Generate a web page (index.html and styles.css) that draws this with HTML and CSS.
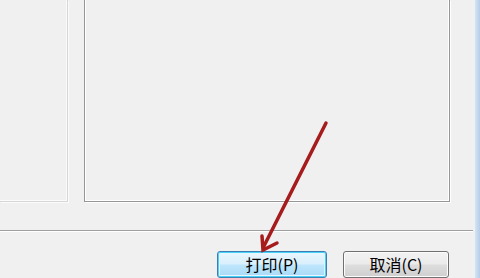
FILE: index.html
```html
<!DOCTYPE html>
<html lang="zh-CN">
<head>
<meta charset="utf-8">
<title>打印</title>
<link rel="stylesheet" href="styles.css">
</head>
<body>
<div class="window">
  <div class="main">
    <div class="panels">
      <div class="left-panel"></div>
      <div class="right-panel"></div>
    </div>
    <div class="separator"></div>
    <div class="buttons">
      <button class="btn btn-default">打印(P)</button>
      <button class="btn">取消(C)</button>
    </div>
  </div>
  <div class="frame"></div>
</div>
<svg class="arrow" width="480" height="278" viewBox="0 0 480 278">
  <line x1="326" y1="123" x2="264" y2="246" stroke="#a61b1b" stroke-width="3.5" stroke-linecap="round"/>
  <polyline points="262,236 263,250 277,243" fill="none" stroke="#a61b1b" stroke-width="3.5" stroke-linejoin="miter" stroke-linecap="round"/>
</svg>
</body>
</html>
```
FILE: styles.css
```css
html, body {
  margin: 0;
  padding: 0;
}
body {
  width: 480px;
  height: 278px;
  overflow: hidden;
  background: #f0f0f0;
  font-family: "Noto Sans CJK SC", "Liberation Sans", sans-serif;
  position: relative;
}
.window {
  display: flex;
  height: 278px;
}
.main {
  width: 474px;
  display: flex;
  flex-direction: column;
}
.frame {
  width: 6px;
  background: linear-gradient(to right, #d6e4f2, #b5cde6);
  border-left: 1px solid #eaf1f9;
  box-sizing: border-box;
}
.panels {
  display: flex;
  height: 202px;
}
.left-panel {
  box-sizing: border-box;
  width: 68px;
  height: 202px;
  border-right: 1px solid #d6d6d6;
  border-bottom: 1px solid #d6d6d6;
  box-shadow: inset -1px -1px 0 #fbfbfb, 1px 1px 0 #fbfbfb;
}
.right-panel {
  box-sizing: border-box;
  margin-left: 16px;
  width: 366px;
  height: 202px;
  border: 1px solid #969696;
  border-top: none;
  box-shadow: inset 1px -1px 0 #ffffff, inset -1px 0 0 #ffffff, 1px 1px 0 #ffffff;
}
.separator {
  margin-top: 28px;
  width: 473px;
  border-top: 1px solid #a0a0a0;
  border-bottom: 1px solid #ffffff;
}
.buttons {
  display: flex;
  gap: 16px;
  padding-top: 19px;
  padding-left: 217px;
}
.btn {
  box-sizing: border-box;
  width: 110px;
  height: 27px;
  margin: 0;
  padding: 0;
  border: 1px solid #707070;
  border-radius: 3px;
  background: linear-gradient(to bottom, #f2f2f2 0%, #ebebeb 48%, #dddddd 52%, #cfcfcf 100%);
  box-shadow: inset 0 0 0 1px #fcfcfc;
  font-family: "Noto Sans CJK SC", "Liberation Sans", sans-serif;
  font-size: 16px;
  line-height: 23px;
  color: #000;
  text-align: center;
}
.btn + .btn {
  width: 106px;
}
.btn-default {
  border-color: #3c7fb1;
  background: linear-gradient(to bottom, #eaf6fd 0%, #d9f0fc 48%, #bee6fd 52%, #a7d9f5 100%);
  box-shadow: inset 0 0 0 1px #48d1f9, inset 0 0 0 2px #e8f6fd;
}
.arrow {
  position: absolute;
  left: 0;
  top: 0;
}
```
